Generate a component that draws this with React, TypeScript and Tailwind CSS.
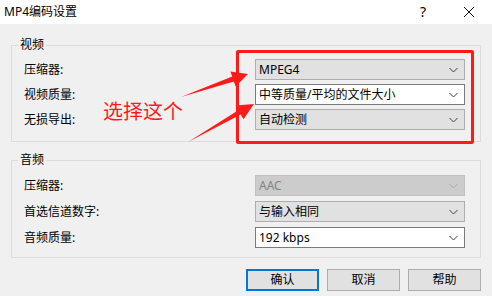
import React from 'react';

type ComboProps = {
    value: string;
    variant?: 'grey' | 'white' | 'disabled';
};

function Chevron({ color }: { color: string }) {
    return (
        <svg width="9" height="6" viewBox="0 0 9 6" className="shrink-0">
            <polyline points="0.5,1 4.5,5 8.5,1" fill="none" stroke={color} strokeWidth="1" />
        </svg>
    );
}

function Combo({ value, variant = 'grey' }: ComboProps) {
    const styles = {
        grey: 'bg-[#e1e1e1] border-[#adadad] text-black',
        white: 'bg-white border-[#7a7a7a] text-black',
        disabled: 'bg-[#cccccc] border-[#bfbfbf] text-[#838383]',
    }[variant];
    return (
        <div className={`h-[21px] w-[210px] border flex items-center justify-between pl-[3px] pr-[6px] text-[12px] leading-[14px] ${styles}`}>
            <span>{value}</span>
            <Chevron color={variant === 'disabled' ? '#a6a6a6' : '#404040'} />
        </div>
    );
}

function Row({ label, children }: { label: string; children: React.ReactNode }) {
    return (
        <>
            <div className="flex items-center text-[12px] leading-[14px] text-black">{label}</div>
            {children}
        </>
    );
}

function Group({ title, rowGap, pt, pb, className, children }: { title: string; rowGap: string; pt: string; pb: string; className: string; children: React.ReactNode }) {
    return (
        <fieldset className={`mx-[11px] border border-[#dcdcdc] ${className}`}>
            <legend className="ml-[6px] px-[2px] text-[12px] leading-[14px] text-black">{title}</legend>
            <div className={`grid grid-cols-[231px_210px] pl-[12px] ${rowGap} ${pt} ${pb}`}>{children}</div>
        </fieldset>
    );
}

export default function App() {
    return (
        <div
            className="relative w-[492px] h-[296px] bg-[#f0f0f0] overflow-hidden"
            style={{ fontFamily: '"Noto Sans", "Noto Sans CJK SC", sans-serif' }}
        >
            {/* Title bar */}
            <div className="h-[24px] bg-white flex items-center pl-[4px]">
                <span className="text-[12px] leading-[14px] text-black">MP4编码设置</span>
                <div className="ml-auto flex items-center">
                    <span className="text-[14px] leading-[14px] text-black w-[46px] text-center">?</span>
                    <svg width="46" height="24" viewBox="0 0 46 24">
                        <path d="M18 7 L28 17 M28 7 L18 17" stroke="#111" strokeWidth="1" />
                    </svg>
                </div>
            </div>

            <Group title="视频" rowGap="gap-y-[4px]" pt="pt-[7px]" pb="pb-[11px]" className="mt-[14px]">
                <Row label="压缩器:">
                    <Combo value="MPEG4" />
                </Row>
                <Row label="视频质量:">
                    <Combo value="中等质量/平均的文件大小" variant="white" />
                </Row>
                <Row label="无损导出:">
                    <Combo value="自动检测" />
                </Row>
            </Group>

            <Group title="音频" rowGap="gap-y-[5px]" pt="pt-[8px]" pb="pb-[9px]" className="mt-[11px]">
                <Row label="压缩器:">
                    <Combo value="AAC" variant="disabled" />
                </Row>
                <Row label="首选信道数字:">
                    <Combo value="与输入相同" />
                </Row>
                <Row label="音频质量:">
                    <Combo value="192 kbps" variant="white" />
                </Row>
            </Group>

            {/* Buttons */}
            <div className="mt-[11px] flex justify-end gap-[8px] pr-[11px]">
                <button className="w-[73px] h-[22px] bg-[#e1e1e1] border-2 border-[#0078d7] text-[12px] leading-[14px] text-black">确认</button>
                <button className="w-[73px] h-[22px] bg-[#e1e1e1] border border-[#adadad] text-[12px] leading-[14px] text-black">取消</button>
                <button className="w-[73px] h-[22px] bg-[#e1e1e1] border border-[#adadad] text-[12px] leading-[14px] text-black">帮助</button>
            </div>

            {/* Annotation overlay */}
            <div className="absolute left-[236px] top-[50px] w-[238px] h-[94px] border-[3px] border-[#ff1a1a] rounded-[2px] pointer-events-none" />
            <span className="absolute left-[103px] top-[101px] text-[20px] leading-[22px] text-[#ff1a1a] pointer-events-none">选择这个</span>
            <svg className="absolute inset-0 pointer-events-none" width="492" height="296" viewBox="0 0 492 296">
                <polygon points="181,97 232.2,76.6 230.4,71.4 248,74 235.6,86.6 233.8,81.4" fill="#ff1a1a" />
                <polygon points="188,142 238.3,110.2 235.5,105.5 254,104 243.5,119.3 240.7,114.6" fill="#ff1a1a" />
            </svg>
        </div>
    );
}
